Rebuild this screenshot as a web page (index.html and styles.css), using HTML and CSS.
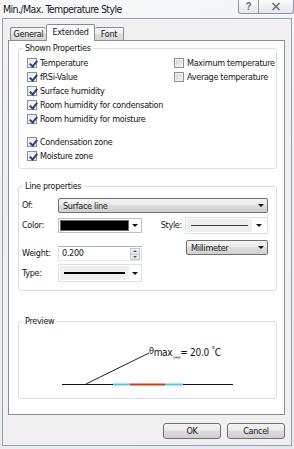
FILE: index.html
```html
<!DOCTYPE html>
<html>
<head>
<meta charset="utf-8">
<title>Min./Max. Temperature Style</title>
<link rel="stylesheet" href="styles.css">
</head>
<body>
<div class="window">
  <div class="titlebar">
    <span class="title">Min./Max. Temperature Style</span>
    <div class="caption">
      <span class="cap-btn help">?</span>
      <span class="cap-btn close"><svg class="x-icon" viewBox="0 0 10 9" width="10" height="9"><path d="M1.5 1 L8.5 8 M8.5 1 L1.5 8" stroke="#6c737b" stroke-width="1.6" fill="none"/></svg></span>
    </div>
  </div>
  <div class="client">
    <div class="tabs">
      <span class="tab general">General</span>
      <span class="tab extended active">Extended</span>
      <span class="tab font">Font</span>
    </div>
    <div class="panel">
      <fieldset class="group shown">
        <legend>Shown Properties</legend>
        <div class="shown-inner">
          <div class="col left">
            <div class="check"><span class="box on"></span>Temperature</div>
            <div class="check"><span class="box on"></span>fRSi-Value</div>
            <div class="check"><span class="box on"></span>Surface humidity</div>
            <div class="check"><span class="box on"></span>Room humidity for condensation</div>
            <div class="check"><span class="box on"></span>Room humidity for moisture</div>
            <div class="spacer"></div>
            <div class="check"><span class="box on"></span>Condensation zone</div>
            <div class="check"><span class="box on"></span>Moisture zone</div>
          </div>
          <div class="col right">
            <div class="check"><span class="box"></span>Maximum temperature</div>
            <div class="check"><span class="box"></span>Average temperature</div>
          </div>
        </div>
      </fieldset>

      <fieldset class="group lines">
        <legend>Line properties</legend>
        <div class="lines-inner">
          <div class="row r1">
            <span class="lbl h15">Of:</span>
            <div class="combo btn-combo of"><span>Surface line</span><span class="arrow"></span></div>
          </div>
          <div class="row r2">
            <span class="lbl h17">Color:</span>
            <div class="combo color-combo"><span class="swatch"></span><span class="arrow-box"><span class="arrow"></span></span></div>
            <span class="lbl style-lbl h17">Style:</span>
            <div class="combo line-combo style"><span class="sample"><span class="stroke thin"></span></span><span class="arrow-box"><span class="arrow"></span></span></div>
          </div>
          <div class="row r3">
            <span class="lbl h15">Weight:</span>
            <div class="spin"><span class="spin-text">0.200</span><span class="spin-btns"><span class="sb up"><span class="tri-up"></span></span><span class="sb down"><span class="tri-down"></span></span></span></div>
            <span class="gap44"></span>
            <div class="combo btn-combo mm"><span>Millimeter</span><span class="arrow"></span></div>
          </div>
          <div class="row r4">
            <span class="lbl h18">Type:</span>
            <div class="combo line-combo type"><span class="sample"><span class="stroke thick"></span></span><span class="arrow-box"><span class="arrow"></span></span></div>
          </div>
        </div>
      </fieldset>

      <fieldset class="group preview">
        <legend>Preview</legend>
        <div class="preview-canvas">
          <svg class="preview-svg" viewBox="0 0 257 71" width="257" height="71">
            <line x1="43" y1="57.5" x2="94" y2="57.5" stroke="#111" stroke-width="1"/>
            <line x1="94" y1="57.5" x2="111" y2="57.5" stroke="#55c6f3" stroke-width="2"/>
            <line x1="111" y1="57.5" x2="146" y2="57.5" stroke="#cf3a12" stroke-width="2"/>
            <line x1="146" y1="57.5" x2="164" y2="57.5" stroke="#55c6f3" stroke-width="2"/>
            <line x1="164" y1="57.5" x2="214" y2="57.5" stroke="#111" stroke-width="1"/>
            <line x1="67" y1="57" x2="130" y2="26" stroke="#222" stroke-width="1"/>
          </svg>
          <span class="formula"><span class="theta">θ</span>max<sub class="sub">i+e</sub>= 20.0 <sup class="deg">°</sup>C</span>
        </div>
      </fieldset>
    </div>
    <div class="buttons">
      <span class="button">OK</span>
      <span class="button">Cancel</span>
    </div>
  </div>
</div>
</body>
</html>
```

FILE: styles.css
```css
* { box-sizing: border-box; }
html, body { margin: 0; padding: 0; }
body {
  width: 294px;
  height: 449px;
  overflow: hidden;
  background: linear-gradient(160deg, #f7f9fb 0%, #eef1f4 40%, #e6eaee 100%);
  font-family: "DejaVu Sans Condensed", "Liberation Sans", Arial, sans-serif;
  font-size: 9px;
  letter-spacing: -0.3px;
  color: #151515;
}
.window { width: 294px; display: flex; flex-direction: column; }

/* title bar */
.titlebar { height: 18px; display: flex; justify-content: space-between; align-items: flex-start; }
.title { font-size: 10.5px; letter-spacing: -0.6px; line-height: 12px; margin: 3px 0 0 3px; color: #202020; }
.caption { display: flex; }
.cap-btn {
  height: 14px; display: flex; align-items: center; justify-content: center;
  border: 1px solid #8f969e; border-top: none;
  background: linear-gradient(#fafbfc, #e3e7eb);
}
.help { width: 21px; border-radius: 0 0 0 3px; font-family: "Liberation Sans", sans-serif; font-weight: bold; font-size: 10px; color: #6c737b; letter-spacing: 0; }
.close { width: 35px; border-left: none; border-radius: 0 0 3px 0; }

/* client */
.client {
  margin: 0 2px 0 2px;
  border: 1px solid #9aa0a7;
  background: #f0f0f0;
  padding: 5px 6px 6px 5px;
  display: flex; flex-direction: column;
}

/* tabs */
.tabs { display: flex; align-items: flex-end; padding-left: 2px; }
.tab {
  height: 13px; line-height: 12px; text-align: center;
  border: 1px solid #898c95; border-bottom: none; border-right: none;
  border-radius: 2px 2px 0 0;
  background: linear-gradient(#f5f5f5, #ececec 50%, #dedede 50%, #d6d6d6);
}
.general { width: 36px; }
.extended { width: 49px; }
.font { width: 29px; border-right: 1px solid #898c95; }
.tab.active {
  height: 17px; line-height: 14px; margin-bottom: -1px;
  background: #fff; border-right: 1px solid #898c95;
  position: relative; z-index: 2;
}
.tab.active + .tab { border-left: none; }

/* panel */
.panel {
  border: 1px solid #898c95;
  background: #fff;
  padding: 0 7px 15px 9px;
}

/* group boxes */
.group {
  margin: 0; padding: 0; min-width: 0;
  border: 1px solid #d5dfe5; border-radius: 3px;
}
.group legend { margin-left: 4px; padding: 0 2px; line-height: 12px; }
.shown { margin-top: 1px; }
.lines { margin-top: 11px; }
.preview { margin-top: 24px; }

/* shown properties */
.shown-inner { display: flex; padding: 2px 0 5px 8px; }
.col.left { width: 147px; }
.check { height: 14px; line-height: 14px; display: flex; align-items: center; white-space: nowrap; }
.spacer { height: 9px; }
.box {
  width: 10px; height: 10px; margin-right: 3px; flex: none;
  border: 1px solid #8e8f8f;
  background: linear-gradient(135deg, #cfd2d6, #f5f5f5);
  box-shadow: inset 0 0 0 1px #f3f3f3;
  position: relative;
}
.box.on { background: linear-gradient(135deg, #e4e6e9, #ffffff); }
.box.on::after {
  content: ""; position: absolute;
  left: 2.5px; top: 0px; width: 3px; height: 6px;
  border: solid #23428f; border-width: 0 2px 2px 0;
  transform: rotate(40deg);
}

/* line properties */
.lines-inner { padding: 6px 8px 8px 3px; }
.row { display: flex; align-items: flex-end; }
.r2 { margin-top: 4px; align-items: center; }
.r3 { margin-top: 6px; height: 21px; }
.r4 { margin-top: 3px; }
.lbl { width: 36px; flex: none; }
.h15 { line-height: 15px; }
.h17 { line-height: 17px; }
.h18 { line-height: 18px; }
.style-lbl { width: 43px; text-align: right; padding-right: 3px; }
.gap44 { width: 44px; flex: none; }

.combo { display: flex; align-items: center; flex: none; }
.btn-combo {
  height: 15px; padding: 0 3px 0 4px; justify-content: space-between;
  border: 1px solid #707070; border-radius: 2px;
  background: linear-gradient(#f3f3f3, #ebebeb 45%, #dddddd 50%, #cfcfcf);
}
.of { width: 210px; }
.mm { width: 82px; align-self: flex-start; }
.arrow {
  width: 0; height: 0;
  border-left: 3px solid transparent; border-right: 3px solid transparent;
  border-top: 3px solid #111;
}
.arrow-box { width: 11px; display: flex; justify-content: center; flex: none; }

.color-combo {
  width: 84px; height: 15px; padding: 1px;
  border: 1px solid #bfc3c8; background: #fff;
}
.swatch { flex: 1; height: 100%; background: #000; border: 1px solid #6a6a6a; }

.line-combo { border: 1px solid #dcdfe3; background: #fff; padding: 1px; }
.style { width: 83px; height: 17px; }
.type { width: 84px; height: 18px; }
.sample { flex: 1; height: 100%; background: #efefef; display: flex; align-items: center; padding: 0 4px; }
.stroke { flex: 1; background: #3a3a3a; }
.thin { height: 1px; }
.thick { height: 2px; background: #000; }
.style .arrow-box { width: 14px; }

.spin {
  width: 84px; height: 15px; display: flex; flex: none;
  border: 1px solid #abadb3; border-color: #abadb3 #dbdfe6 #e3e9ef #e2e3ea;
  background: #fff;
}
.spin-text { flex: 1; padding-left: 3px; line-height: 13px; }
.spin-btns { width: 11px; display: flex; flex-direction: column; padding: 1px 1px 0 0; }
.sb {
  flex: 1; display: flex; align-items: center; justify-content: center;
  background: linear-gradient(#f1f4f7, #dfe5ea); border: 1px solid #c3cad1;
}
.sb.down { border-top: none; }
.tri-up { width: 0; height: 0; border-left: 2px solid transparent; border-right: 2px solid transparent; border-bottom: 2px solid #4a5a6a; }
.tri-down { width: 0; height: 0; border-left: 2px solid transparent; border-right: 2px solid transparent; border-top: 2px solid #4a5a6a; }

/* preview */
.preview-canvas { height: 71px; position: relative; }
.preview-svg { position: absolute; left: 0; top: 0; }
.formula {
  position: absolute; left: 130px; top: 18px;
  font-size: 10px; line-height: 12px; white-space: nowrap; color: #111;
}
.theta { font-size: 9px; vertical-align: 2px; }
.sub { font-size: 5px; vertical-align: -3px; margin-left: 1px; }
.deg { font-size: 8px; vertical-align: 3px; }

/* buttons */
.buttons { display: flex; justify-content: flex-end; gap: 6px; margin-top: 8px; }
.button {
  width: 58px; height: 16px; line-height: 14px; text-align: center;
  border: 1px solid #707070; border-radius: 3px;
  background: linear-gradient(#f3f3f3, #ebebeb 45%, #dddddd 50%, #cfcfcf);
}
```
